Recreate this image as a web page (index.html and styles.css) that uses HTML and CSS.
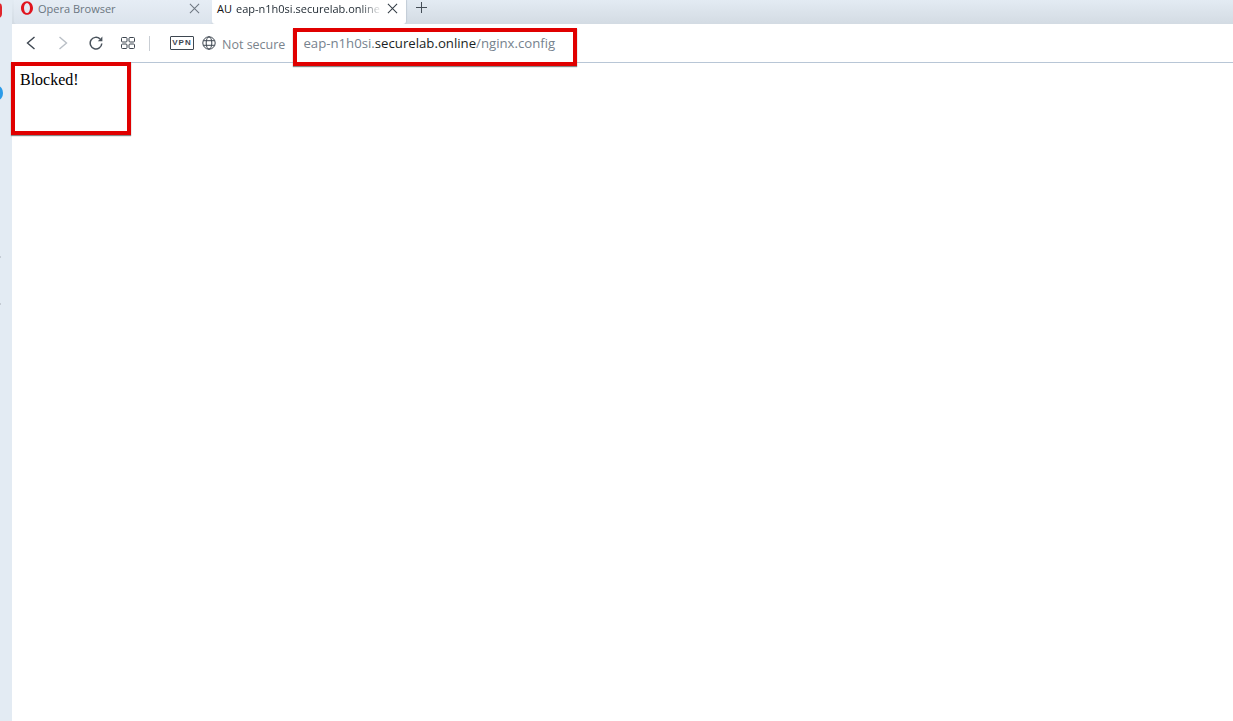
FILE: index.html
```html
<!DOCTYPE html>
<html lang="en">
<head>
    <meta charset="UTF-8">
    <title>Blocked</title>
    <link rel="stylesheet" href="styles.css">
</head>
<body>
    <div class="sidebar">
        <div class="side-logo"></div>
        <div class="side-dot"></div>
        <div class="side-tick side-tick-one"></div>
        <div class="side-tick side-tick-two"></div>
    </div>
    <div class="main">
        <div class="tabs">
            <div class="tab">
                <svg class="tab-icon" viewBox="0 0 14 14"><path fill-rule="evenodd" fill="#e0141e" d="M7 0.2C10.4 0.2 13 3.2 13 7S10.4 13.8 7 13.8 1 10.8 1 7 3.6 0.2 7 0.2ZM7 1.9C5.3 1.9 4 4.1 4 7S5.3 12.1 7 12.1 10 9.9 10 7 8.7 1.9 7 1.9Z"/></svg>
                <span class="tab-title">Opera Browser</span>
                <svg class="tab-close" viewBox="0 0 12 12"><path d="M1 1l10 10M11 1L1 11" stroke="#6d7680" stroke-width="1.1" fill="none"/></svg>
            </div>
            <div class="tab tab-active">
                <span class="tab-prefix">AU</span>
                <span class="tab-title">eap-n1h0si.securelab.online</span>
                <svg class="tab-close" viewBox="0 0 12 12"><path d="M1 1l10 10M11 1L1 11" stroke="#333c45" stroke-width="1.1" fill="none"/></svg>
            </div>
            <svg class="tab-new" viewBox="0 0 12 12"><path d="M6 0v12M0 6h12" stroke="#444d56" stroke-width="1.1" fill="none"/></svg>
        </div>
        <div class="toolbar">
            <svg class="btn btn-back" viewBox="0 0 14 14"><path d="M10.5 1L3.5 7l7 6" stroke="#3d4650" stroke-width="1.4" fill="none"/></svg>
            <svg class="btn btn-forward" viewBox="0 0 14 14"><path d="M2.5 1l7 6-7 6" stroke="#b9bfc6" stroke-width="1.4" fill="none"/></svg>
            <svg class="btn btn-reload" viewBox="0 0 14 14"><path d="M12.8 7.5A5.8 5.8 0 1 1 11 2.9" stroke="#4a535c" stroke-width="1.5" fill="none"/><path d="M13.4 0.6v4.6H8.8z" fill="#4a535c"/></svg>
            <svg class="btn btn-grid" viewBox="0 0 14 14"><g fill="none" stroke="#3d4650" stroke-width="1"><rect x="0.5" y="1.5" width="5.5" height="4.5" rx="1"/><rect x="8" y="1.5" width="5.5" height="4.5" rx="1"/><rect x="0.5" y="8" width="5.5" height="4.5" rx="1"/><rect x="8" y="8" width="5.5" height="4.5" rx="1"/></g></svg>
            <div class="divider"></div>
            <div class="vpn">VPN</div>
            <svg class="globe" viewBox="0 0 14 14"><g fill="none" stroke="#3d4650" stroke-width="1"><circle cx="7" cy="7" r="6.2"/><ellipse cx="7" cy="7" rx="2.8" ry="6.2"/><path d="M1.3 4.7h11.4M1.3 9.3h11.4"/></g></svg>
            <span class="not-secure">Not secure</span>
            <div class="url"><span class="url-dim">eap-n1h0si.</span>securelab.online<span class="url-dim">/nginx.config</span></div>
        </div>
        <div class="content">Blocked!</div>
    </div>
    <div class="mark mark-url"></div>
    <div class="mark mark-page"></div>
</body>
</html>
```

FILE: styles.css
```css
html, body {
    height: 100%;
}

body {
    margin: 0;
    display: flex;
    overflow: hidden;
    background-color: #e3ebf3;
    font-family: "Open Sans", "Liberation Sans", sans-serif;
    color: #333;
}

.sidebar {
    position: relative;
    width: 12px;
    flex-shrink: 0;
}

/* cut off logo and badge at the window edge */
.side-logo {
    position: absolute;
    left: -6px;
    top: 3px;
    width: 4px;
    height: 11px;
    border: 2px solid #e0252b;
    border-radius: 4px;
}

.side-dot {
    position: absolute;
    left: -7px;
    top: 86px;
    width: 10px;
    height: 14px;
    border-radius: 50%;
    background-color: #2b9be8;
}

.side-tick {
    position: absolute;
    left: 0;
    width: 1px;
    height: 2px;
    background-color: #c5ccd4;
}

.side-tick-one {
    top: 256px;
}

.side-tick-two {
    top: 303px;
}

.main {
    flex: 1;
    display: flex;
    flex-direction: column;
    min-width: 0;
}

.tabs {
    height: 24px;
    display: flex;
    align-items: flex-start;
    background: linear-gradient(#e3ebf3, #d3dbe3);
}

.tab {
    width: 198px;
    height: 24px;
    margin-left: 2px;
    padding: 0 12px 0 6px;
    box-sizing: border-box;
    display: flex;
    align-items: center;
    background: linear-gradient(#e6edf5, #dbe3ec);
    border-radius: 0 0 3px 3px;
    font-size: 11px;
    color: #6b7681;
}

.tab-icon {
    width: 14px;
    height: 14px;
    margin-right: 4px;
    margin-top: -8px;
    flex-shrink: 0;
}

.tab-title {
    flex: 1;
    white-space: nowrap;
    overflow: hidden;
    margin-top: -7px;
}

.tab-close {
    width: 11px;
    height: 11px;
    margin-top: -8px;
    margin-left: 5px;
    flex-shrink: 0;
}

.tab-active {
    width: 194px;
    margin-left: 0;
    padding: 0 8px 0 5px;
    background: white;
    color: #1d2730;
    box-shadow: 1px 0 1px #c3ccd6;
}

.tab-active .tab-title {
    -webkit-mask-image: linear-gradient(to right, black 85%, transparent);
    mask-image: linear-gradient(to right, black 85%, transparent);
}

.tab-prefix {
    margin-right: 4px;
    margin-top: -7px;
    color: #111;
}

.tab-new {
    width: 11px;
    height: 11px;
    margin: 2px 0 0 10px;
}

.toolbar {
    height: 38px;
    display: flex;
    align-items: center;
    background-color: white;
    border-bottom: 1px solid #b8c6d6;
}

.btn {
    width: 14px;
    height: 14px;
    flex-shrink: 0;
}

.btn-back {
    margin-left: 12px;
}

.btn-forward {
    margin-left: 19px;
}

.btn-reload {
    margin-left: 18px;
}

.btn-grid {
    margin-left: 18px;
}

.divider {
    width: 1px;
    height: 15px;
    margin-left: 14px;
    background-color: #c9ced4;
}

.vpn {
    margin-left: 20px;
    width: 22px;
    height: 12px;
    border: 1px solid #3d4650;
    border-radius: 1px;
    font-family: "Liberation Sans", sans-serif;
    font-size: 8px;
    font-weight: bold;
    letter-spacing: 1px;
    line-height: 12px;
    text-align: center;
    color: #3d4650;
}

.globe {
    width: 14px;
    height: 14px;
    margin-left: 8px;
}

.not-secure {
    margin-left: 6px;
    margin-top: 2px;
    font-size: 12.5px;
    color: #7a838c;
}

.url {
    margin-left: 18px;
    font-size: 13.2px;
    color: #1a1f24;
    white-space: nowrap;
}

.url-dim {
    color: #76828e;
}

.content {
    flex: 1;
    padding: 8px;
    background-color: white;
    font-family: "Liberation Serif", serif;
    font-size: 16px;
    color: black;
}

/* red annotation boxes drawn over the screenshot */
.mark {
    position: absolute;
    box-sizing: border-box;
    border: 4px solid #e00000;
    box-shadow: 0 1px 1px #888;
}

.mark-url {
    left: 293px;
    top: 28px;
    width: 284px;
    height: 38px;
}

.mark-page {
    left: 11px;
    top: 62px;
    width: 120px;
    height: 73px;
}
```
